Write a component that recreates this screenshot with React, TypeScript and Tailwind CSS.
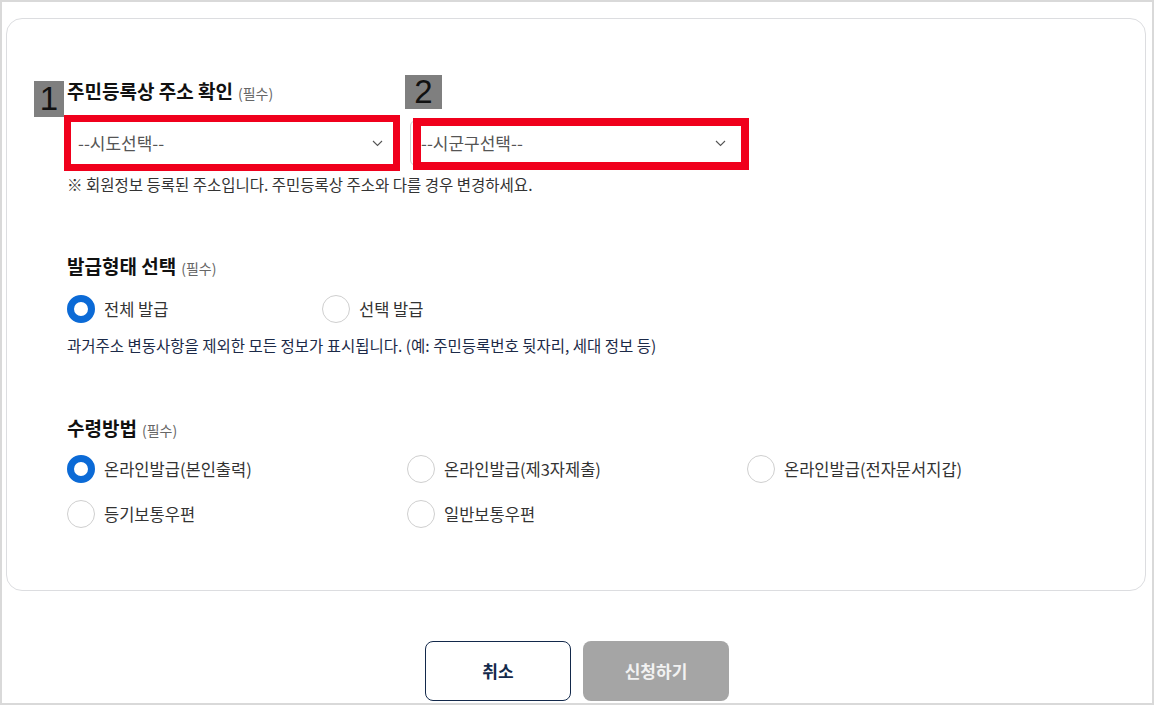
import React from "react";

const FONT = { fontFamily: '"Noto Sans CJK KR", "Noto Sans", sans-serif' };

function Chevron() {
  return (
    <svg width="11" height="7" viewBox="0 0 11 7" fill="none">
      <path d="M1 1 L5.5 5.5 L10 1" stroke="#555" strokeWidth="1.1" />
    </svg>
  );
}

function Radio({ checked, label }: { checked?: boolean; label: string }) {
  return (
    <div className="flex items-center gap-[9px]">
      {checked ? (
        <span className="w-[28px] h-[28px] rounded-full border-[7px] border-[#0b6ad6] bg-white" />
      ) : (
        <span className="w-[28px] h-[28px] rounded-full border border-[#cfcfcf] bg-white" />
      )}
      <span className="text-[16.5px] text-[#333] leading-[24px]">{label}</span>
    </div>
  );
}

function Title({ text }: { text: string }) {
  return (
    <div className="flex items-baseline gap-[5px] leading-[24px]">
      <span className="text-[19px] font-bold text-[#111]">{text}</span>
      <span className="text-[14px] text-[#666]">(필수)</span>
    </div>
  );
}

export default function App() {
  return (
    <div style={FONT} className="w-[1154px] h-[705px] border-2 border-[#d9d9d9] bg-white overflow-hidden">
      <div className="mt-[16px] ml-[4px] w-[1140px] h-[573px] rounded-[16px] border border-[#dcdde0] pl-[60px] pt-[60px] relative">
        {/* Section 1 */}
        <div className="relative">
          <div
            style={{ fontFamily: '"Liberation Sans", sans-serif' }}
            className="absolute left-[-33px] top-[2px] w-[30px] h-[36px] bg-[#7f7f7f] text-[#111] text-[33px] leading-[36px] text-center"
          >
            1
          </div>
          <div
            style={{ fontFamily: '"Liberation Sans", sans-serif' }}
            className="absolute left-[338px] top-[-4px] w-[37px] h-[34px] bg-[#7f7f7f] text-[#111] text-[33px] leading-[34px] text-center"
          >
            2
          </div>
          <Title text="주민등록상 주소 확인" />
          <div className="flex gap-[13px] mt-[15px]">
            <div className="relative w-[330px] h-[46px] border border-[#d0d0d0] rounded-[6px] flex items-center justify-between pl-[10px] pr-[13px]">
              <span className="text-[17px] text-[#555]">--시도선택--</span>
              <Chevron />
              <div className="absolute left-[-4px] right-[-4px] top-[-6px] bottom-[-6px] border-[7px] border-[#f0001c]" />
            </div>
            <div className="relative w-[334px] h-[46px] border border-[#d0d0d0] rounded-[6px] flex items-center justify-between pl-[10px] pr-[17px]">
              <span className="text-[17px] text-[#555]">--시군구선택--</span>
              <Chevron />
              <div className="absolute left-[2px] right-[-6px] top-[-3px] bottom-[-5px] border-[8px] border-[#f0001c]" />
            </div>
          </div>
          <div className="mt-[8px] text-[15.5px] text-[#333] leading-[20px]">
            ※ 회원정보 등록된 주소입니다. 주민등록상 주소와 다를 경우 변경하세요.
          </div>
        </div>

        {/* Section 2 */}
        <div className="mt-[60px]">
          <Title text="발급형태 선택" />
          <div className="flex mt-[15px]">
            <div className="w-[255px]"><Radio checked label="전체 발급" /></div>
            <Radio label="선택 발급" />
          </div>
          <div className="mt-[12px] text-[15.5px] text-[#1c2a48] leading-[20px]">
            과거주소 변동사항을 제외한 모든 정보가 표시됩니다. (예: 주민등록번호 뒷자리, 세대 정보 등)
          </div>
        </div>

        {/* Section 3 */}
        <div className="mt-[61px]">
          <Title text="수령방법" />
          <div className="grid grid-cols-[340px_340px_340px] gap-y-[17px] mt-[13px]">
            <Radio checked label="온라인발급(본인출력)" />
            <Radio label="온라인발급(제3자제출)" />
            <Radio label="온라인발급(전자문서지갑)" />
            <Radio label="등기보통우편" />
            <Radio label="일반보통우편" />
          </div>
        </div>
      </div>

      <div className="flex justify-center gap-[12px] mt-[50px]">
        <button className="w-[146px] h-[60px] rounded-[8px] border border-[#13294b] bg-white text-[#13294b] text-[17px] font-bold">취소</button>
        <button className="w-[146px] h-[60px] rounded-[8px] bg-[#a5a5a5] text-[#f2f2f2] text-[17px] font-bold">신청하기</button>
      </div>
    </div>
  );
}
